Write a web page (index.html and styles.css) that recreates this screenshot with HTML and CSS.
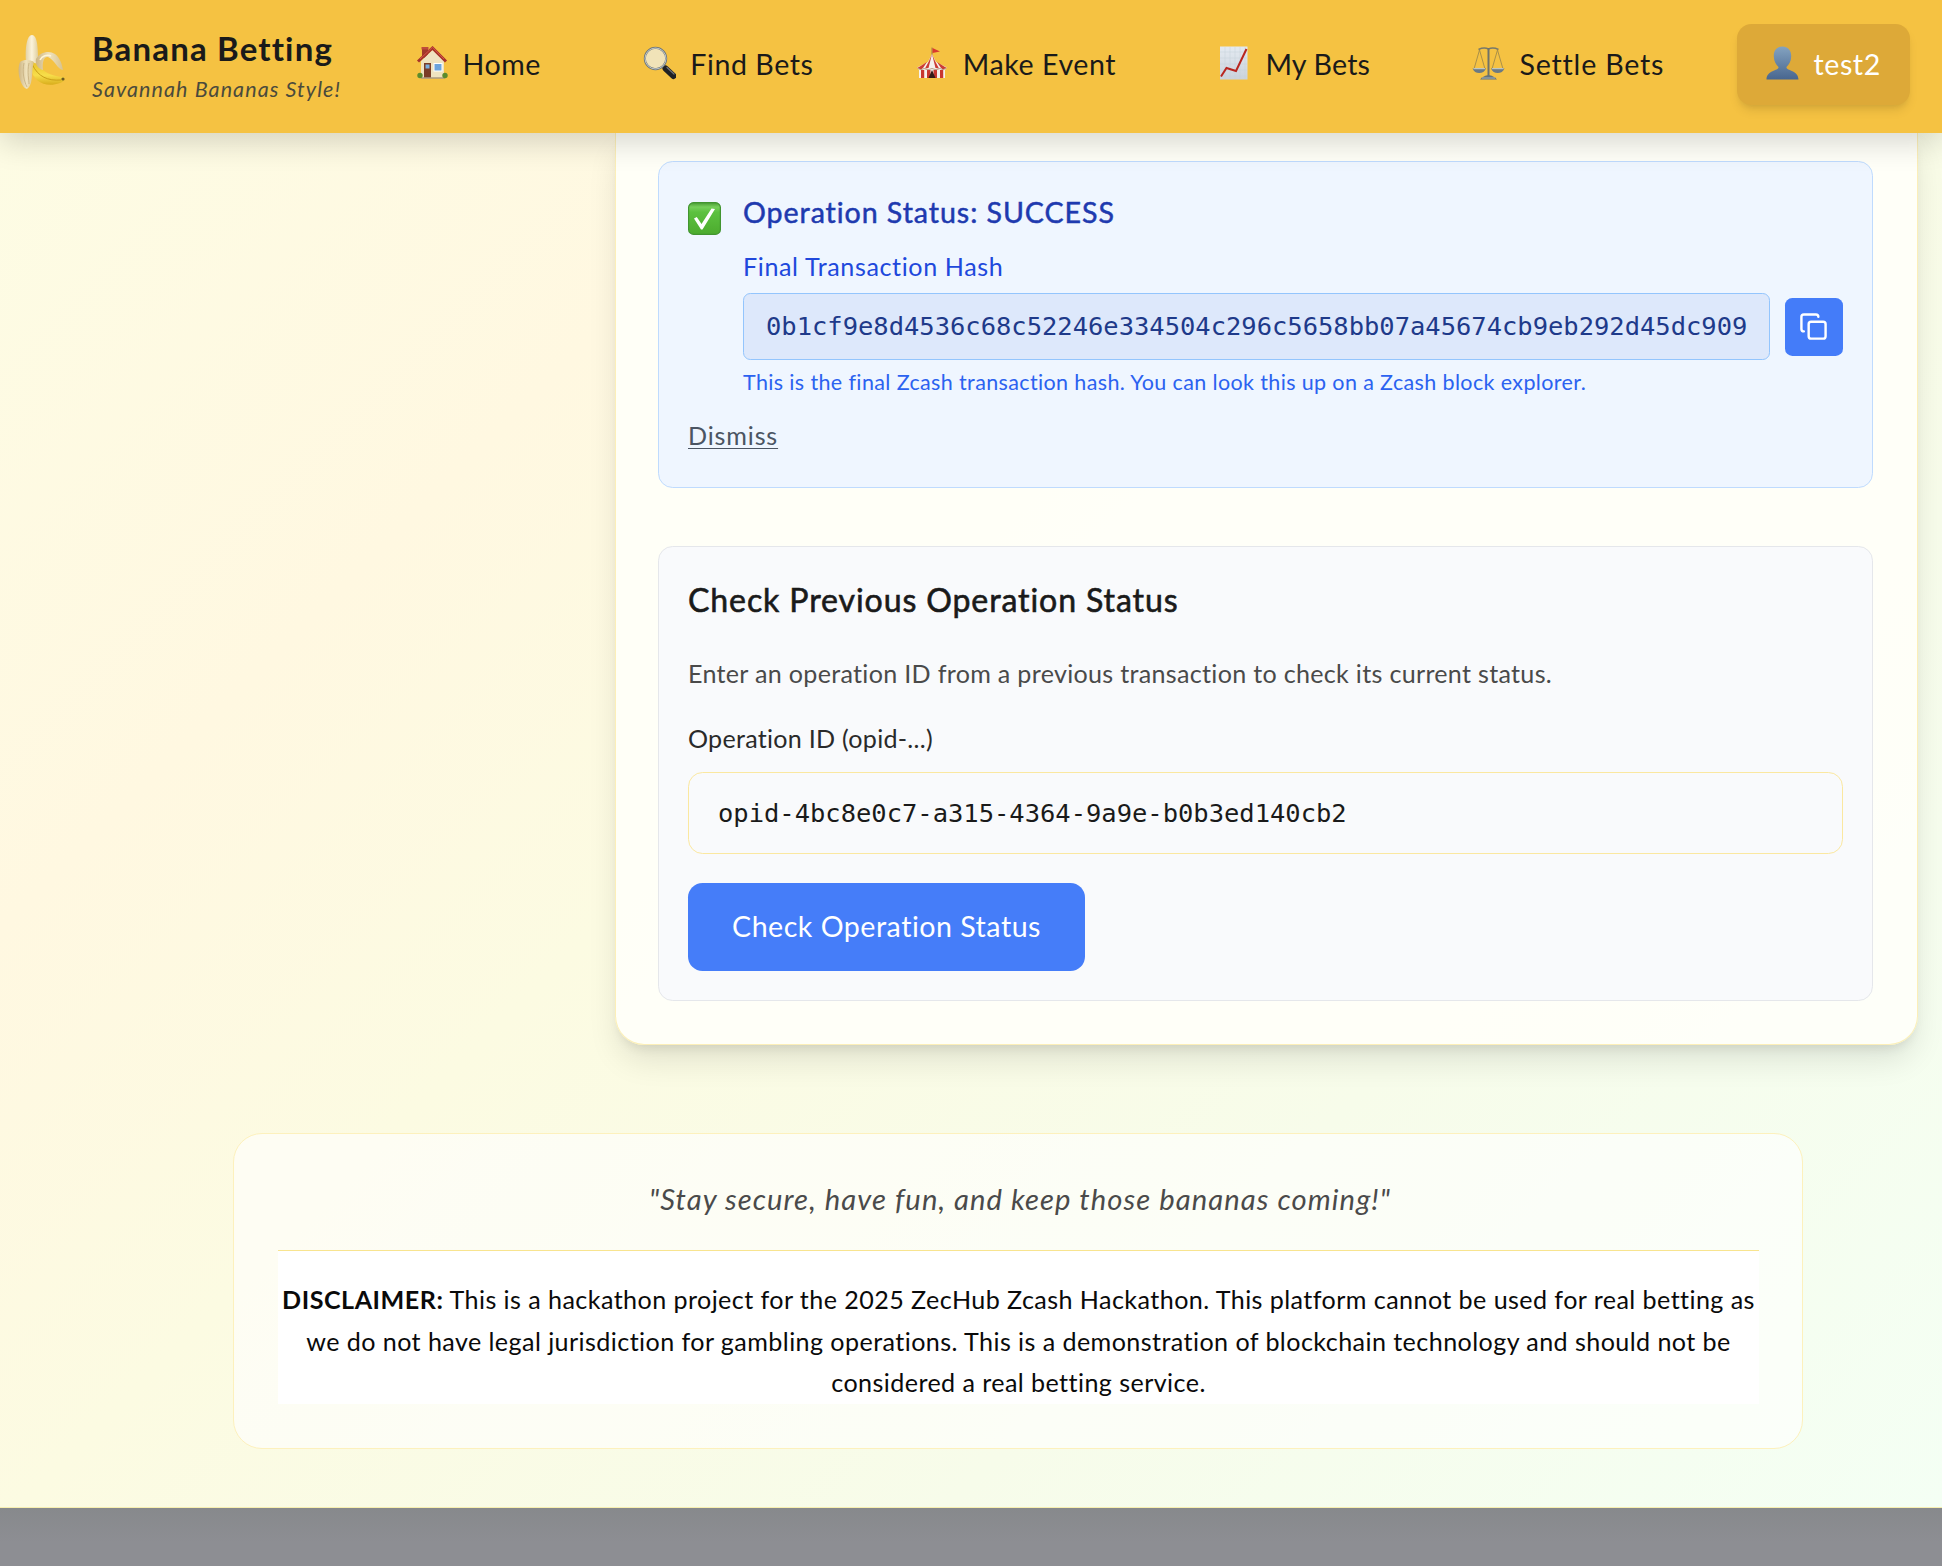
FILE: index.html
```html
<!DOCTYPE html>
<html lang="en">
<head>
<meta charset="utf-8">
<title>Banana Betting</title>
<link rel="stylesheet" href="styles.css">
</head>
<body>
<header class="header">
  <a class="brand">
    <svg class="brand-icon" viewBox="0 0 47 56" width="47" height="56">
      <defs>
        <linearGradient id="peel" x1="0" y1="0" x2="1" y2="0"><stop offset="0" stop-color="#cdb583"/><stop offset=".5" stop-color="#efe2bd"/><stop offset="1" stop-color="#d8c28c"/></linearGradient>
        <linearGradient id="flesh" x1="0" y1="0" x2="1" y2="0"><stop offset="0" stop-color="#e3d2a4"/><stop offset=".5" stop-color="#fbf3dc"/><stop offset="1" stop-color="#e0cf9f"/></linearGradient>
        <linearGradient id="skin" x1="0" y1="0" x2="0" y2="1"><stop offset="0" stop-color="#e8bf25"/><stop offset=".6" stop-color="#f7de4a"/><stop offset="1" stop-color="#d9ad1c"/></linearGradient>
      </defs>
      <path d="M8 28C7 18 8 1 14 1C20 1 20 18 20 28L14 31Z" fill="url(#flesh)"/>
      <path d="M13 27C20 29 25 42 45 43C48 44 46 48 42 49C28 54 15 48 13 34Z" fill="url(#skin)"/>
      <path d="M14 30C20 43 30 47 43 46" fill="none" stroke="#c99f19" stroke-width="1"/>
      <path d="M18 25C22 18 31 16 37 20C42 24 44 30 45 36C40 36 36 25 30 23C26 22 24 28 25 36C20 35 17 30 18 25Z" fill="url(#peel)"/>
      <path d="M22 26C24 22 29 20 33 22" fill="none" stroke="#fff5d5" stroke-width="1.5"/>
      <path d="M2 28C6 25 13 26 16 28C13 35 16 51 9 55C3 54-2 38 2 28Z" fill="url(#peel)"/>
      <path d="M6 29C4 38 6 47 9 53M11 29C9 38 11 46 11 50" fill="none" stroke="#c4ad7e" stroke-width=".8"/>
      <circle cx="45" cy="45" r="1.6" fill="#6d5a22"/>
    </svg>
    <span class="brand-text">
      <span class="brand-name">Banana Betting</span>
      <span class="brand-tag">Savannah Bananas Style!</span>
    </span>
  </a>
  <nav class="nav">
    <a class="nav-item nav-home">
      <svg class="nav-icon" viewBox="0 0 33 34">
        <path d="M7 2h6v10H7z" fill="#a23a2b"/><path d="M6.500 1h7v2.500h-7z" fill="#bf4c3a"/>
        <path d="M6 15L17.500 4L29 15V32H6Z" fill="#efe3c0"/>
        <path d="M3 15.500L17.500 2L31 15.500" fill="none" stroke="#a7332a" stroke-width="3"/>
        <path d="M5 13L17.500 1.300L29 13" fill="none" stroke="#d6584a" stroke-width="1"/>
        <path d="M9 17h7v15H9z" fill="#7a3d27"/><path d="M10.500 18.500h4v4h-4z" fill="#78aee0"/>
        <path d="M18.500 17h9v8.500h-9z" fill="#fff"/><path d="M19.500 18h7v6.500h-7z" fill="#6ca4dc"/>
        <path d="M6 32h24" stroke="#a89a83" stroke-width="1.500"/>
        <circle cx="5" cy="29.500" r="2.700" fill="#5b8b2d"/><circle cx="30" cy="29.500" r="2.700" fill="#5b8b2d"/>
      </svg>
      <span>Home</span>
    </a>
    <a class="nav-item nav-find">
      <svg class="nav-icon" viewBox="0 0 33 34">
        <path d="M20 20l4 4" stroke="#777b7d" stroke-width="3"/>
        <path d="M22.500 22.500L30.500 30" stroke="#202123" stroke-width="6" stroke-linecap="round"/>
        <path d="M24 21.500L31 28" stroke="#72757a" stroke-width="1.200" stroke-linecap="round"/>
        <circle cx="12.500" cy="12.500" r="10.700" fill="#f1e3b8" stroke="#6d7679" stroke-width="2"/>
        <circle cx="12.500" cy="12.500" r="10.500" fill="none" stroke="#d5dadb" stroke-width=".8"/>
      </svg>
      <span>Find Bets</span>
    </a>
    <a class="nav-item nav-make">
      <svg class="nav-icon" viewBox="0 0 33 34">
        <path d="M17 10V1.500" stroke="#a88a45" stroke-width="1.200"/><path d="M17.500 2L25 5.500L17.500 7Z" fill="#d9392f"/>
        <path d="M17 8L21 16L32 21.500L30 24V32H4V24L2 21.500L13 16Z" fill="#f6f1ed"/>
        <path d="M17 8L15 16L13.500 22L10 22.500L14 15ZM17 8L19 16L20.500 22L24 22.500L20 15ZM12 16L4 21L2 22L6 23.500L8 22ZM22 16L30 21L32 22L28 23.500L26 22Z" fill="#cb3c34"/>
        <path d="M6 24h3.200v8H6zM12 24h3.500v8H12zM18.500 24H22v8h-3.500zM25 24h3.200v8H25z" fill="#c8362f"/>
        <path d="M17 24L20.500 32H13.500Z" fill="#351b18"/><path d="M3 22.500Q6 25 9 22.500Q13 25 17 22.500Q21 25 25 22.500Q28 25 31 22.500" fill="none" stroke="#b79d87" stroke-width="1"/>
      </svg>
      <span>Make Event</span>
    </a>
    <a class="nav-item nav-my">
      <svg class="nav-icon" viewBox="0 0 33 34">
        <defs><linearGradient id="paper" x1="0" y1="0" x2="0" y2="1"><stop offset="0" stop-color="#e4eaf1"/><stop offset="1" stop-color="#cbd3dc"/></linearGradient></defs>
        <path d="M2 .500h27.500v33H2z" fill="url(#paper)"/>
        <path d="M7 1v32M12 1v32M17 1v32M22 1v32M27 1v32M2 6h27M2 12h27M2 18h27M2 24h27M2 30h27" stroke="#c6d0db" stroke-width=".5"/>
        <path d="M3 30.500L8.500 22L18 25L28.500 3" fill="none" stroke="#b9261f" stroke-width="2"/>
      </svg>
      <span>My Bets</span>
    </a>
    <a class="nav-item nav-settle">
      <svg class="nav-icon" viewBox="0 0 33 34">
        <path d="M6.500 3.500Q12 1 16.500 3Q21 1 26.500 3.500" fill="none" stroke="#78796a" stroke-width="1.500"/>
        <path d="M16.500 2V30" stroke="#6f7269" stroke-width="2"/>
        <path d="M7.500 4L2 23M7.500 4L13 23M25.500 4L20 23M25.500 4L31 23" fill="none" stroke="#a28a4a" stroke-width=".9"/>
        <path d="M.500 22.500H14Q12 27 7.200 27Q2.500 27 .500 22.500ZM19 22.500H32.500Q30.500 27 25.700 27Q21 27 19 22.500Z" fill="#6b7a83"/>
        <path d="M1.500 22.700H13M20 22.700H31.500" stroke="#c6d0d3" stroke-width="1"/>
        <path d="M10 31.500Q16.500 26.500 23 31.500L25 33.500H8Z" fill="#65737a"/><path d="M10 32H23" stroke="#b8c3c5" stroke-width=".8"/>
      </svg>
      <span>Settle Bets</span>
    </a>
    <a class="nav-item nav-user">
      <svg class="nav-icon" viewBox="0 0 33 34">
        <defs><linearGradient id="person" x1="0" y1="0" x2="0" y2="1"><stop offset="0" stop-color="#84a3c0"/><stop offset="1" stop-color="#48668f"/></linearGradient></defs>
        <path d="M16.500 .500C22 .500 25.500 4.500 25.200 10.500C25 15.500 23 18.500 20.500 21C20 25 32.500 24 32.500 33.500H.500C.500 24 13 25 12.500 21C10 18.500 8 15.500 7.800 10.500C7.500 4.500 11 .500 16.500 .500Z" fill="url(#person)"/>
      </svg>
      <span>test2</span>
    </a>
  </nav>
</header>
<main class="page">
  <section class="card">
    <div class="status">
      <div class="status-row">
        <svg class="status-icon" viewBox="0 0 33 33">
          <defs><linearGradient id="ok" x1="0" y1="0" x2="0" y2="1"><stop offset="0" stop-color="#4a9c35"/><stop offset=".14" stop-color="#76cf5a"/><stop offset=".3" stop-color="#5cc13f"/><stop offset="1" stop-color="#4cab2e"/></linearGradient></defs>
          <rect x=".600" y=".600" width="31.800" height="31.800" rx="5" fill="url(#ok)" stroke="#429530" stroke-width="1.200"/>
          <path d="M6 16.500L8.800 15L13.500 22L23.500 6.500L27 7L14.500 27.500H13Z" fill="#fff"/>
        </svg>
        <div class="status-body">
          <h3 class="status-title">Operation Status: SUCCESS</h3>
          <p class="status-label">Final Transaction Hash</p>
          <div class="hash-row">
            <code class="hash">0b1cf9e8d4536c68c52246e334504c296c5658bb07a45674cb9eb292d45dc909</code>
            <button class="copy" aria-label="Copy">
              <svg viewBox="0 0 24 24" width="29" height="29" fill="none" stroke="#fff" stroke-width="2" stroke-linecap="round" stroke-linejoin="round"><rect x="8" y="8" width="14" height="14" rx="2"/><path d="M4 16c-1.100 0-2-.900-2-2V4c0-1.100.900-2 2-2h10c1.100 0 2 .900 2 2"/></svg>
            </button>
          </div>
          <p class="status-note">This is the final Zcash transaction hash. You can look this up on a Zcash block explorer.</p>
        </div>
      </div>
      <a class="dismiss">Dismiss</a>
    </div>
    <div class="check">
      <h3 class="check-title">Check Previous Operation Status</h3>
      <p class="check-desc">Enter an operation ID from a previous transaction to check its current status.</p>
      <label class="check-label" for="opid">Operation ID (opid-...)</label>
      <input class="check-input" id="opid" value="opid-4bc8e0c7-a315-4364-9a9e-b0b3ed140cb2">
      <button class="check-button">Check Operation Status</button>
    </div>
  </section>
  <section class="notice">
    <p class="quote">"Stay secure, have fun, and keep those bananas coming!"</p>
    <p class="disclaimer"><strong>DISCLAIMER:</strong> This is a hackathon project for the 2025 ZecHub Zcash Hackathon. This platform cannot be used for real betting as we do not have legal jurisdiction for gambling operations. This is a demonstration of blockchain technology and should not be considered a real betting service.</p>
  </section>
</main>
<footer class="footer"></footer>
</body>
</html>
```
FILE: styles.css
```css
* { box-sizing: border-box; }

body {
  margin: 0;
  height: 1566px;
  overflow: hidden;
  display: flex;
  flex-direction: column;
  font-family: Lato, "Open Sans", sans-serif;
  color: #1a1a1a;
}

h3, p { margin: 0; font-weight: 400; }
button { border: 0; padding: 0; font-family: inherit; }

.header {
  position: relative;
  z-index: 2;
  flex: none;
  height: 133px;
  padding: 0 32px 0 18px;
  display: flex;
  justify-content: space-between;
  background: #f5c242;
  box-shadow: 0 9px 29px rgba(0, 0, 0, .16);
}

.brand { display: flex; gap: 27px; }
.brand-icon { margin-top: 34px; }
.brand-text { display: flex; flex-direction: column; padding-top: 28px; }
.brand-name { font-size: 33px; line-height: 40px; font-weight: 700; letter-spacing: 1.15px; }
.brand-tag { font-size: 21.5px; line-height: 30px; margin-top: 6px; font-style: italic; letter-spacing: 1.08px; color: #4a4a3c; }

.nav { display: flex; gap: 43.4px; padding-top: 24px; }
.nav-item {
  height: 81px;
  padding: 0 29.2px;
  display: flex;
  gap: 14.6px;
  font-size: 28.6px;
  line-height: 80px;
  letter-spacing: .55px;
  border-radius: 14.6px;
  white-space: nowrap;
}
.nav-icon { width: 33px; height: 34px; margin-top: 22px; flex: none; }
.nav-my { letter-spacing: .17px; }
.nav-settle { letter-spacing: .79px; }
.nav-user {
  background: #dda938;
  color: #fff;
  box-shadow: 0 7px 11px -2px rgba(0, 0, 0, .1), 0 4px 7px -4px rgba(0, 0, 0, .1);
}

.page {
  flex: none;
  height: 1375px;
  border-bottom: 1px solid #f7efb0;
  background: linear-gradient(135deg, #fdfce4 0%, #fff8e1 24%, #fcfbe2 42%, #f7fcea 70%, #f4fff4 100%);
}

.card {
  margin-left: 615px;
  width: 1303px;
  padding: 28px 44px 43px 42px;
  border: 1px solid #fcefb8;
  border-top: 0;
  border-radius: 0 0 29px 29px;
  background: rgba(255, 255, 250, .9);
  background-clip: padding-box;
  box-shadow: 0 18px 32px -4px rgba(0, 0, 0, .11), 0 7px 12px -5px rgba(0, 0, 0, .1);
}

.status {
  height: 327px;
  padding: 29px;
  border: 1px solid #bfdbfe;
  border-radius: 14.6px;
  background: #eff6ff;
}
.status-row { display: flex; gap: 22px; }
.status-icon { width: 33px; height: 33px; margin-top: 11px; flex: none; }
.status-body { flex: 1; }
.status-title { font-size: 28.6px; line-height: 42px; letter-spacing: .93px; color: #1e3aaf; -webkit-text-stroke: .5px; }
.status-label { margin-top: 15px; font-size: 25.1px; line-height: 36px; letter-spacing: .62px; color: #2048dc; }
.hash-row { margin-top: 9px; display: flex; align-items: center; justify-content: space-between; }
.hash {
  width: 1027px;
  height: 67px;
  padding-left: 22px;
  border: 1px solid #93c5fd;
  border-radius: 7.3px;
  background: #dde8fb;
  color: #1e3a8a;
  font: 25.47px/65px "DejaVu Sans Mono", monospace;
}
.copy { width: 58px; height: 58px; padding-right: 1px; display: flex; align-items: center; justify-content: center; border-radius: 7.3px; background: #447cf9; }
.status-note { margin-top: 7px; font-size: 21.5px; line-height: 31px; letter-spacing: .37px; color: #2b62f0; }
.dismiss { display: block; margin-top: 19px; font-size: 25.1px; line-height: 37px; letter-spacing: .85px; color: #4b5563; text-decoration: underline; text-decoration-thickness: 1px; text-underline-offset: 3px; }

.check {
  margin-top: 58px;
  padding: 29px;
  border: 1px solid #e5e7eb;
  border-radius: 14.6px;
  background: #f9fafc;
}
.check-title { font-size: 32.1px; line-height: 48px; letter-spacing: .88px; -webkit-text-stroke: .6px; }
.check-desc { margin-top: 31px; font-size: 25.1px; line-height: 37px; letter-spacing: .3px; color: #4a4a4a; }
.check-label { display: block; margin-top: 28px; font-size: 25.1px; line-height: 37px; letter-spacing: .27px; color: #2a2a2a; }
.check-input {
  display: block;
  width: 100%;
  height: 82px;
  margin-top: 15px;
  padding: 0 29px;
  border: 1px solid #fbe8a0;
  border-radius: 14.6px;
  background: transparent;
  color: #1a1a1a;
  font: 25.47px "DejaVu Sans Mono", monospace;
}
.check-button {
  display: block;
  width: 397px;
  height: 88px;
  margin-top: 29px;
  padding-bottom: 2px;
  border-radius: 14.6px;
  background: #457df9;
  color: #fff;
  font-size: 28.6px;
  letter-spacing: .5px;
}

.notice {
  width: 1570px;
  height: 316px;
  margin: 88px 0 0 233px;
  padding: 42px 43px 42px 44px;
  border: 1px solid #fdf1bd;
  border-radius: 29px;
  background: rgba(255, 255, 255, .6);
  text-align: center;
}
.quote { padding-left: 3px; font-size: 29.2px; line-height: 45px; font-style: italic; letter-spacing: 1.08px; color: #4a4a4a; }
.disclaimer {
  margin-top: 29px;
  padding-top: 28px;
  border-top: 1px solid #f8e48f;
  background: #fff;
  color: #0a0a0a;
  font-size: 25.1px;
  line-height: 41.6px;
  letter-spacing: .43px;
}
.disclaimer strong { letter-spacing: .53px; }

.footer { flex: 1; background: linear-gradient(#87898c, #8d8e93 60%); }
```
